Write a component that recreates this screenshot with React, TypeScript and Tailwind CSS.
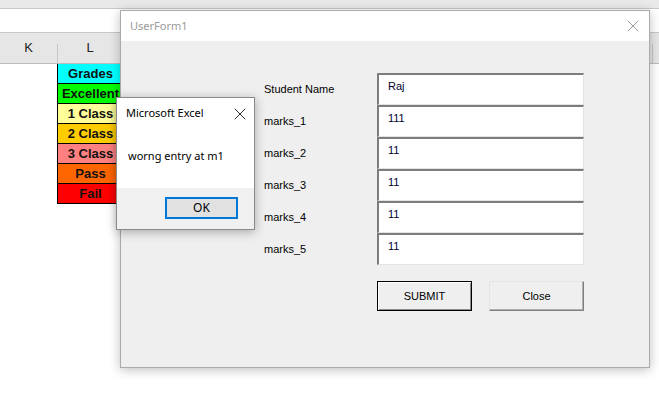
import { X } from 'lucide-react'

const GRADES = [
  { label: 'Grades', bg: 'bg-[#00ffff]' },
  { label: 'Excellent', bg: 'bg-[#00ff00]' },
  { label: '1 Class', bg: 'bg-[#ffff99]' },
  { label: '2 Class', bg: 'bg-[#ffcc00]' },
  { label: '3 Class', bg: 'bg-[#ff8080]' },
  { label: 'Pass', bg: 'bg-[#ff6600]' },
  { label: 'Fail', bg: 'bg-[#ff0000]' },
]

const FIELDS = [
  { label: 'Student Name', value: 'Raj' },
  { label: 'marks_1', value: '111' },
  { label: 'marks_2', value: '11' },
  { label: 'marks_3', value: '11' },
  { label: 'marks_4', value: '11' },
  { label: 'marks_5', value: '11' },
]

function Sheet() {
  return (
    <div className="flex flex-col">
      {/* ribbon edge + formula bar */}
      <div className="h-[9px] bg-[#e9e9e9] border-b border-[#c8c8c8]" />
      <div className="h-[24px] bg-white border-b border-[#c8c8c8]" />
      {/* column headers */}
      <div className="flex h-[31px] bg-[#e6e6e6] border-b border-[#bcbcbc] text-[13px] text-[#222]">
        <div className="w-[57px] flex items-center justify-center">K</div>
        <div className="w-[65px] flex items-center justify-center border-l border-[#c6c6c6] mt-[11px] pb-[11px]">L</div>
        <div className="flex-1" />
        <div className="w-[7px] border-l border-[#c6c6c6] mt-[11px]" />
      </div>
      {/* grade legend */}
      <div className="ml-[57px] w-[66px] flex flex-col border-l border-black">
        {GRADES.map((g) => (
          <div
            key={g.label}
            className={`${g.bg} h-[20px] border-b border-black flex items-center justify-center text-[13px] font-bold text-[#111] leading-none`}
          >
            {g.label}
          </div>
        ))}
      </div>
    </div>
  )
}

function UserForm() {
  return (
    <div className="absolute left-[120px] top-[10px] w-[530px] h-[358px] flex flex-col border border-[#aaaaaa] bg-[#efefef] shadow-[0_2px_10px_rgba(0,0,0,0.25)]">
      {/* title bar */}
      <div className="h-[30px] bg-white flex items-center justify-between pl-[9px] pr-[6px]">
        <span className="text-[11px] text-[#9a9a9a] font-['Noto_Sans',sans-serif]">UserForm1</span>
        <X className="w-[20px] h-[20px] text-[#7a7a7a]" strokeWidth={0.9} />
      </div>
      {/* body */}
      <div className="flex-1 pt-[32px] pl-[143px] text-[11px] text-black">
        <div className="flex flex-col">
          {FIELDS.map((f) => (
            <div key={f.label} className="flex h-[32px]">
              <div className="w-[113px] flex items-center">{f.label}</div>
              <div className="w-[207px] bg-white border-t-2 border-l-2 border-t-[#7d7d7d] border-l-[#7d7d7d] border-b border-r border-b-[#e3e3e3] border-r-[#e3e3e3] pl-[9px] pt-[3px] text-[#000030]">
                {f.value}
              </div>
            </div>
          ))}
        </div>
        <div className="flex gap-[17px] ml-[113px] mt-[16px]">
          <button className="w-[95px] h-[30px] border border-black bg-[#efefef] shadow-[inset_1px_1px_0_#ffffff,inset_-1px_-1px_0_#8a8a8a] text-[11px]">
            SUBMIT
          </button>
          <button className="w-[95px] h-[30px] bg-[#efefef] border border-t-[#e4e4e4] border-l-[#e4e4e4] border-b-[#7f7f7f] border-r-[#7f7f7f] shadow-[inset_-1px_-1px_0_#b0b0b0] text-[11px]">
            Close
          </button>
        </div>
      </div>
    </div>
  )
}

function MessageBox() {
  return (
    <div className="absolute left-[116px] top-[97px] w-[139px] h-[133px] flex flex-col border border-[#8a8a8a] bg-white shadow-[0_2px_10px_rgba(0,0,0,0.3)] font-['Noto_Sans',sans-serif]">
      <div className="h-[31px] flex items-center justify-between pl-[9px] pr-[4px]">
        <span className="text-[11px] text-black">Microsoft Excel</span>
        <X className="w-[20px] h-[20px] text-black" strokeWidth={1} />
      </div>
      <div className="flex-1 flex items-center pl-[11px] pb-[4px] text-[11px] text-black">
        worng entry at m1
      </div>
      <div className="h-[41px] bg-[#f0f0f0] flex items-start justify-end pr-[16px] pt-[9px]">
        <button className="w-[73px] h-[22px] bg-[#e1e1e1] border-2 border-[#0078d7] text-[12px] text-black flex items-center justify-center">
          OK
        </button>
      </div>
    </div>
  )
}

export default function App() {
  return (
    <div className="relative w-[659px] h-[409px] overflow-hidden bg-white font-['Liberation_Sans',sans-serif]">
      <Sheet />
      <UserForm />
      <MessageBox />
    </div>
  )
}
